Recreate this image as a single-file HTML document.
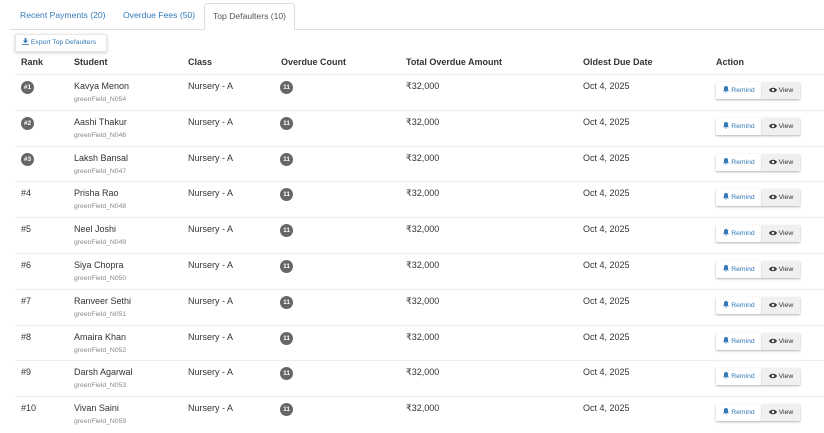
<!DOCTYPE html>
<html><head><style>
body{margin:0;width:824px;height:428px;background:#fff;font-family:"Liberation Sans",sans-serif;color:#333;overflow:hidden;position:relative}
.tabs{position:absolute;left:10px;top:0;right:0;height:29px;border-bottom:1px solid #ddd}
.tab{position:absolute;top:10px;font-size:8.6px;color:#337ab7}
.tab.act{top:3px;height:27px;left:194px;width:91px;border:1px solid #ddd;border-bottom:1px solid #fff;background:#fff;color:#555;box-sizing:border-box;border-radius:3px 3px 0 0;text-align:center;line-height:25px;font-size:8.6px}
.exp{position:absolute;left:15px;top:34px;width:92px;height:18px;border:1px solid #e8e8e8;box-shadow:0 1px 3px rgba(0,0,0,.2);box-sizing:border-box;font-size:6.8px;color:#337ab7;line-height:16px;padding-left:6px}
.h{position:absolute;top:57px;font-size:9px;font-weight:bold;color:#333}
.row{position:absolute;left:15px;right:0;height:36px;border-top:1px solid #eee}
.row div{position:absolute;font-size:9px}
.sub{font-size:6.8px!important;color:#888}
.bd{width:13px;height:13px;border-radius:7px;background:#666;color:#fff;font-size:6.5px!important;font-weight:bold;text-align:center;line-height:13px}
.btn{height:17px;box-shadow:0 1px 2px rgba(0,0,0,.3);font-size:6.8px!important;line-height:17px;text-align:center}
svg{vertical-align:-1px}
</style></head><body>
<div class="tabs">
<div class="tab" style="left:10px">Recent Payments (20)</div>
<div class="tab" style="left:113px">Overdue Fees (50)</div>
<div class="tab act">Top Defaulters (10)</div>
</div>
<div class="exp"><svg width="7" height="7" viewBox="0 0 8 8"><path d="M3 0h2v3h2L4 6 1 3h2z M0 7h8v1H0z" fill="#337ab7"/></svg> Export Top Defaulters</div>
<div class="h" style="left:21px">Rank</div><div class="h" style="left:74px">Student</div><div class="h" style="left:188px">Class</div><div class="h" style="left:281px">Overdue Count</div><div class="h" style="left:406px">Total Overdue Amount</div><div class="h" style="left:583px">Oldest Due Date</div><div class="h" style="left:716px">Action</div>
<div id="rows"></div>
<script>
var d=[["Kavya Menon","N054"],["Aashi Thakur","N046"],["Laksh Bansal","N047"],["Prisha Rao","N048"],["Neel Joshi","N049"],["Siya Chopra","N050"],["Ranveer Sethi","N051"],["Amaira Khan","N052"],["Darsh Agarwal","N053"],["Vivan Saini","N059"]];
var bell='<svg width="6" height="7" viewBox="0 0 6 7"><path d="M3 0C1.6 0 1 1 1 2.3V4L0 5.2h6L5 4V2.3C5 1 4.4 0 3 0zM2.2 5.8h1.6L3 7z" fill="#337ab7"/></svg>';
var eye='<svg width="8" height="6" viewBox="0 0 8 6"><path d="M0 3C1.5 0 6.5 0 8 3 6.5 6 1.5 6 0 3z" fill="#333"/><circle cx="4" cy="3" r="1.3" fill="#f0f0f0"/></svg>';
var h="";d.forEach(function(r,i){var t=74+i*35.8;
var rank=i<3?'<div class="bd" style="left:6px;top:6px">#'+(i+1)+'</div>':'<div style="left:6px;top:6px">#'+(i+1)+'</div>';
h+='<div class="row" style="top:'+t+'px">'+rank+'<div style="left:59px;top:6px">'+r[0]+'</div><div class="sub" style="left:59px;top:21px">greenField_'+r[1]+'</div><div style="left:173px;top:6px">Nursery - A</div><div class="bd" style="left:265px;top:6px">11</div><div style="left:391px;top:6px">₹32,000</div><div style="left:568px;top:6px">Oct 4, 2025</div><div class="btn" style="left:701px;top:7px;width:46px;color:#337ab7;background:#fff">'+bell+' Remind</div><div class="btn" style="left:747px;top:7px;width:38px;background:#f0f0f0;color:#333">'+eye+' View</div></div>';});
document.getElementById("rows").innerHTML=h;
</script>
</body></html>
